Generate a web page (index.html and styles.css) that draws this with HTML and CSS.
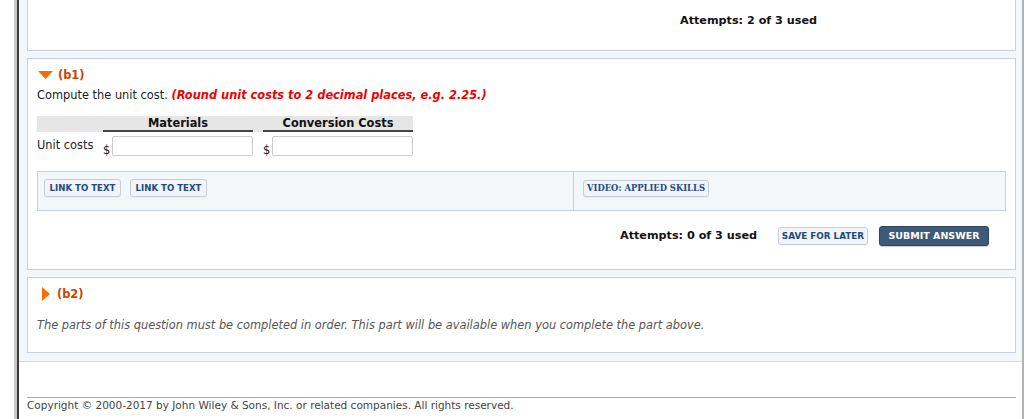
FILE: index.html
```html
<!DOCTYPE html>
<html lang="en">
<head>
<meta charset="utf-8">
<title>Question</title>
<link rel="stylesheet" href="styles.css">
</head>
<body>
<div class="shell">
  <div class="frame">
    <div class="inner">
      <div class="qarea">
        <section class="card card-top">
          <div class="attempts attempts-top">Attempts: 2 of 3 used</div>
        </section>

        <section class="card part">
          <div class="part-head">
            <svg class="tri-down" width="15" height="8" viewBox="0 0 15 8"><polygon points="0,0 15,0 7.5,8" fill="#ff6a00"/></svg>
            <span class="part-label">(b1)</span>
          </div>
          <p class="prompt">Compute the unit cost. <em class="hint">(Round unit costs to 2 decimal places, e.g. 2.25.)</em></p>

          <div class="grid">
            <div class="grid-head">
              <div class="hcell blank"></div>
              <div class="hcell">Materials</div>
              <div class="hcell">Conversion Costs</div>
            </div>
            <div class="grid-row">
              <div class="row-label">Unit costs</div>
              <div class="cell"><span class="dollar">$</span><input class="field" type="text"></div>
              <div class="cell"><span class="dollar">$</span><input class="field" type="text"></div>
            </div>
          </div>

          <div class="links">
            <div class="links-left">
              <button class="btn">LINK TO TEXT</button>
              <button class="btn">LINK TO TEXT</button>
            </div>
            <div class="links-right">
              <button class="btn btn-video">VIDEO: APPLIED SKILLS</button>
            </div>
          </div>

          <div class="actions">
            <span class="attempts">Attempts: 0 of 3 used</span>
            <button class="btn btn-save">SAVE FOR LATER</button>
            <button class="btn btn-submit">SUBMIT ANSWER</button>
          </div>
        </section>

        <section class="card part part-b2">
          <div class="part-head">
            <svg class="tri-right" width="8" height="14" viewBox="0 0 8 14"><polygon points="0,0 8,7 0,14" fill="#ff6a00"/></svg>
            <span class="part-label">(b2)</span>
          </div>
          <p class="locked">The parts of this question must be completed in order. This part will be available when you complete the part above.</p>
        </section>
      </div>

      <footer class="footer">Copyright © 2000-2017 by John Wiley &amp; Sons, Inc. or related companies. All rights reserved.</footer>
    </div>
  </div>
</div>
</body>
</html>
```

FILE: styles.css
```css
* { box-sizing: border-box; }

html, body {
  margin: 0;
  padding: 0;
  background: #ffffff;
  font-family: "DejaVu Sans", Verdana, sans-serif;
  font-size: 11.4px;
  color: #222;
}

.shell {
  padding-left: 14px;
  height: 419px;
  overflow: hidden;
}

.frame {
  border-left: 3px solid #c8c8c8;
  height: 100%;
}

.inner {
  border-left: 2px solid #3a3a3a;
  border-right: 2px solid #b4b4b4;
  height: 100%;
}

.qarea {
  background: #f4f7fa;
  padding: 0 6px 8px 8px;
  border-bottom: 1px solid #d3dbe4;
}

.card {
  background: #fff;
  border: 1px solid #c7d2de;
  margin-bottom: 7px;
}

.card:last-child { margin-bottom: 0; }

.card-top {
  border-top: none;
  height: 51px;
  padding-left: 652px;
  padding-top: 14px;
}

.attempts {
  font-weight: bold;
  font-size: 11.2px;
  line-height: 14px;
  color: #111;
}

.part {
  padding: 8px 9px 23px 9px;
}

.part-head {
  display: flex;
  align-items: center;
  height: 16px;
  gap: 5px;
}

.tri-down { margin-left: 1px; }
.tri-right { margin-left: 5px; margin-right: 2px; }

.part-label {
  font-weight: bold;
  color: #cc4400;
  font-size: 11.4px;
}

.prompt {
  margin: 4px 0 0 0;
  line-height: 16px;
  color: #222;
}

.hint {
  color: #f20000;
  font-weight: bold;
  font-style: italic;
}

.grid {
  margin-top: 13px;
  width: 376px;
}

.grid-head,
.grid-row {
  display: grid;
  grid-template-columns: 56px 150px 150px;
  column-gap: 10px;
}

.grid-head {
  background: #e6e6e6;
}

.hcell {
  font-weight: bold;
  text-align: center;
  line-height: 14px;
  border-bottom: 2px solid #444;
  color: #111;
}

.hcell.blank { border-bottom: none; }

.grid-row {
  margin-top: 4px;
}

.row-label {
  line-height: 14px;
  padding-top: 2px;
  white-space: nowrap;
}

.cell {
  display: flex;
  align-items: flex-end;
}

.dollar {
  width: 9px;
  line-height: 12px;
}

.field {
  flex: 1;
  min-width: 0;
  height: 20px;
  border: 1px solid #cccccc;
  border-radius: 2px;
  background: #fff;
  margin: 0;
  padding: 0 4px;
  font: inherit;
}

.links {
  margin-top: 15px;
  display: flex;
  height: 40px;
  border: 1px solid #c7d2de;
  background: #f4f7fa;
}

.links-left {
  width: 535px;
  padding: 7px 6px;
  display: flex;
  gap: 9px;
  align-items: flex-start;
}

.links-right {
  flex: 1;
  border-left: 1px solid #c7d2de;
  padding: 8px 9px;
}

.btn {
  font-family: "DejaVu Sans", Verdana, sans-serif;
  font-weight: bold;
  font-size: 8.6px;
  color: #234a7e;
  background: #f1f4f8;
  border: 1px solid #c5ceda;
  border-radius: 3px;
  height: 18px;
  padding: 0 5px;
  margin: 0;
  line-height: 16px;
  cursor: pointer;
  box-shadow: 0 1px 0 rgba(0, 0, 0, 0.04);
}

.links-left .btn { width: 77px; padding: 0; }

.btn-video {
  width: 126px;
  height: 17px;
  line-height: 15px;
  padding: 0;
  font-size: 8.4px;
  font-family: "DejaVu Serif", Georgia, serif;
}

.actions {
  margin-top: 15px;
  margin-right: 17px;
  display: flex;
  justify-content: flex-end;
  align-items: center;
  height: 20px;
}

.actions .attempts { margin-right: 21px; }

.btn-save {
  width: 90px;
  padding: 0;
  height: 18px;
  margin-right: 11px;
  font-size: 8.8px;
}

.btn-submit {
  width: 110px;
  height: 20px;
  padding: 0;
  background: #3d5a79;
  border: 1px solid #2c4662;
  color: #fff;
  font-size: 9.5px;
  box-shadow: 0 1px 1px rgba(0, 0, 0, 0.2);
}

.part-b2 {
  padding-bottom: 19px;
}

.locked {
  margin: 15px 0 0 0;
  line-height: 16px;
  font-style: italic;
  color: #555;
}

.footer {
  margin: 35px 6px 0 8px;
  border-top: 1px solid #a9a9a9;
  font-size: 10.5px;
  line-height: 14px;
  color: #444;
}
```
